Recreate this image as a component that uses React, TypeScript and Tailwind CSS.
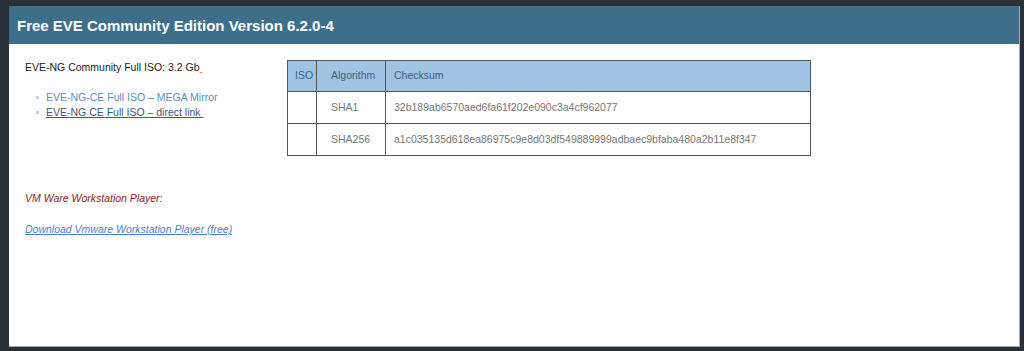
import React from "react";

export default function App() {
  return (
    <div className="w-[1024px] h-[351px] bg-[#293038] pt-[6px] pl-[9px] overflow-hidden" style={{ fontFamily: '"Liberation Sans", Arial, sans-serif' }}>
      <div className="w-[1011px] h-[341px] bg-white border-r border-b border-[#a8a8a8] flex flex-col">
        <div className="h-[38px] bg-[#3d6f8b] flex items-center pl-[8px] pt-[1px]">
          <h1 className="text-white font-bold text-[15px] leading-none">Free EVE Community Edition Version 6.2.0-4</h1>
        </div>
        <div className="flex pl-[16px] pt-[16px]">
          <div className="w-[262px] text-[10.5px]">
            <p className="text-[#222] leading-[14px]">
              EVE-NG Community Full ISO: 3.2 Gb<span className="underline decoration-[#e08a3c]">&nbsp;</span>
            </p>
            <ul className="mt-[16px] pl-[11px] leading-[15px]">
              <li className="flex items-center gap-[7px]">
                <span className="w-[3px] h-[3px] bg-[#b8d3ea] inline-block" />
                <a className="text-[#5b8fc3]">EVE-NG-CE Full ISO – MEGA Mirror</a>
              </li>
              <li className="flex items-center gap-[7px]">
                <span className="w-[3px] h-[3px] bg-[#b8d3ea] inline-block" />
                <a className="text-[#3d5a78] underline">EVE-NG CE Full ISO – direct link&nbsp;</a>
              </li>
            </ul>
            <p className="mt-[71px] italic text-[#8b2323] leading-[14px]">VM Ware Workstation Player:</p>
            <p className="mt-[17px] italic leading-[14px]">
              <a className="text-[#4a7fe0] underline">Download Vmware Workstation Player (free)</a>
            </p>
          </div>
          <div>
            <table className="table-fixed border-collapse border border-[#555] text-[10.5px] w-[524px]">
              <colgroup>
                <col className="w-[29px]" />
                <col className="w-[69px]" />
                <col />
              </colgroup>
              <thead>
                <tr className="bg-[#9fc3e2] text-[#3e5f86] h-[31px]">
                  <th className="border border-[#555] font-normal text-left pl-[7px]">ISO</th>
                  <th className="border border-[#555] font-normal text-left pl-[14px]">Algorithm</th>
                  <th className="border border-[#555] font-normal text-left pl-[8px]">Checksum</th>
                </tr>
              </thead>
              <tbody className="text-[#777]">
                <tr className="h-[32px]">
                  <td className="border border-[#555]"></td>
                  <td className="border border-[#555] pl-[14px]">SHA1</td>
                  <td className="border border-[#555] pl-[8px]">32b189ab6570aed6fa61f202e090c3a4cf962077</td>
                </tr>
                <tr className="h-[32px]">
                  <td className="border border-[#555]"></td>
                  <td className="border border-[#555] pl-[14px]">SHA256</td>
                  <td className="border border-[#555] pl-[8px]">a1c035135d618ea86975c9e8d03df549889999adbaec9bfaba480a2b11e8f347</td>
                </tr>
              </tbody>
            </table>
          </div>
        </div>
      </div>
    </div>
  );
}
